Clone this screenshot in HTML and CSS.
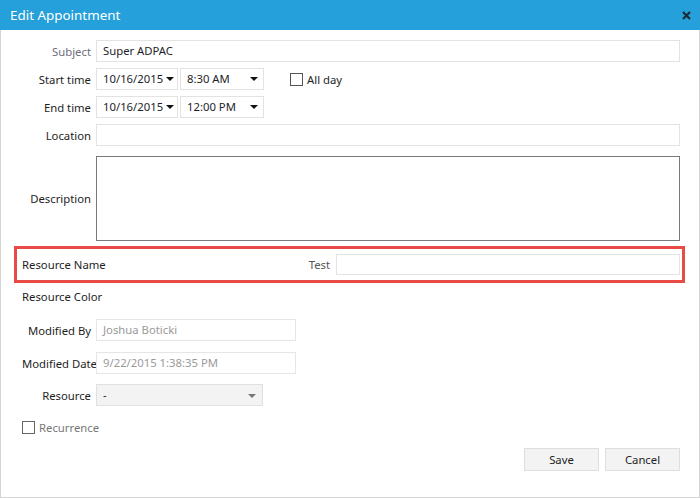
FILE: index.html
```html
<!DOCTYPE html>
<html>
<head>
<meta charset="utf-8">
<link rel="stylesheet" href="styles.css">
</head>
<body>
<div class="dialog">
  <div class="titlebar">
    <span class="title">Edit Appointment</span>
    <svg class="close" width="9" height="9" viewBox="0 0 9 9"><path d="M1 1L8 8M8 1L1 8" stroke="#1b2b3a" stroke-width="2.2"/></svg>
  </div>
  <div class="form">
    <div class="row">
      <label class="lbl lbl-muted">Subject</label>
      <div class="input">Super ADPAC</div>
    </div>
    <div class="row">
      <label class="lbl">Start time</label>
      <div class="inline">
        <div class="drop date">10/16/2015<span class="arrow"></span></div>
        <div class="drop time">8:30 AM<span class="arrow"></span></div>
        <div class="check allday"><span class="box"></span>All day</div>
      </div>
    </div>
    <div class="row">
      <label class="lbl">End time</label>
      <div class="inline">
        <div class="drop date">10/16/2015<span class="arrow"></span></div>
        <div class="drop time">12:00 PM<span class="arrow"></span></div>
      </div>
    </div>
    <div class="row">
      <label class="lbl">Location</label>
      <div class="input"></div>
    </div>
    <div class="row row-desc">
      <label class="lbl">Description</label>
      <div class="textarea"></div>
    </div>
    <div class="highlight">
      <span class="hl-name">Resource Name</span>
      <span class="hl-test">Test</span>
      <div class="input hl-input"></div>
    </div>
    <div class="plain color">Resource Color</div>
    <div class="row row-mod">
      <label class="lbl">Modified By</label>
      <div class="input short disabled">Joshua Boticki</div>
    </div>
    <div class="row row-mod2">
      <label class="lbl lbl-wide">Modified Date</label>
      <div class="input short disabled">9/22/2015 1:38:35 PM</div>
    </div>
    <div class="row row-mod2">
      <label class="lbl">Resource</label>
      <div class="combo">-<span class="arrow gray"></span></div>
    </div>
    <div class="check recurrence"><span class="box"></span>Recurrence</div>
    <div class="buttons">
      <button class="btn">Save</button>
      <button class="btn">Cancel</button>
    </div>
  </div>
</div>
</body>
</html>
```
FILE: styles.css
```css
* { box-sizing: border-box; }
html, body { margin: 0; padding: 0; background: #fff; }
body {
  font-family: "Noto Sans", "Open Sans", sans-serif;
  font-size: 11.3px;
  color: #1e1e1e;
}
.dialog {
  width: 700px;
  height: 498px;
  border: 1px solid #d4d4d4;
  border-top: none;
  background: #fff;
}
.titlebar {
  height: 30px;
  margin: 0 -1px;
  background: #26a0da;
  display: flex;
  align-items: center;
  justify-content: space-between;
  padding: 0 9px 0 10px;
}
.title { color: #fff; font-size: 13.4px; }
.close { display: block; }
.form {
  padding: 10px 19px 0 0;
  display: flex;
  flex-direction: column;
}
.row {
  display: grid;
  grid-template-columns: 90px 1fr;
  column-gap: 5px;
  align-items: center;
  height: 22px;
  margin-bottom: 6px;
}
.lbl { text-align: right; white-space: nowrap; }
.lbl-muted { color: #6e6e7c; }
.lbl-wide { margin-right: -6px; }
.input {
  height: 22px;
  border: 1px solid #e3e3e3;
  padding: 0 6px;
  line-height: 20px;
  color: #1e1e2a;
  background: #fff;
}
.inline { display: flex; align-items: center; gap: 2px; height: 22px; }
.drop {
  position: relative;
  height: 22px;
  border: 1px solid #e3e3e3;
  line-height: 20px;
  padding: 0 6px;
  color: #1e1e2a;
}
.date { width: 82px; }
.time { width: 84px; }
.arrow {
  position: absolute;
  right: 4px;
  top: 8px;
  width: 0; height: 0;
  border-left: 4px solid transparent;
  border-right: 4px solid transparent;
  border-top: 4px solid #111;
}
.date .arrow { right: 3px; }
.time .arrow { right: 5px; }
.arrow.gray { border-top-color: #777; right: 6px; top: 9px; }
.check { display: flex; align-items: center; white-space: nowrap; }
.box {
  width: 13px; height: 13px;
  border: 1px solid #555;
  background: #fff;
  margin-right: 4px;
}
.allday { margin-left: 24px; }
.row:nth-child(4) { margin-bottom: 10px; }
.row-desc { height: 85px; margin-bottom: 5px; }
.textarea { height: 85px; border: 1px solid #7a7a7a; }
.highlight {
  margin: 0 -5px 0 13px;
  border: 3px solid #e84a45;
  height: 37px;
  display: flex;
  align-items: center;
  padding: 0 2px 0 5px;
}
.hl-name { flex: 0 0 auto; }
.hl-test { margin-left: auto; margin-right: 6px; color: #555; }
.hl-input { width: 344px; height: 21px; }
.plain { padding-left: 21px; }
.color { margin-top: 4px; height: 20px; line-height: 20px; }
.row-mod { margin-top: 12px; margin-bottom: 11px; }
.row-mod2 { margin-bottom: 10px; }
.short { width: 200px; }
.disabled { color: #9a9a9a; border-color: #e6e6e6; }
.combo {
  position: relative;
  width: 167px;
  height: 22px;
  background: #f3f3f3;
  border: 1px solid #e0e0e0;
  line-height: 20px;
  padding: 0 6px;
}
.recurrence { padding-left: 21px; color: #777; margin-top: 4px; height: 14px; }
.recurrence .box { border-color: #666; }
.buttons {
  display: flex;
  justify-content: flex-end;
  gap: 6px;
  margin-top: 14px;
}
.btn {
  width: 75px;
  height: 23px;
  background: #f3f3f3;
  border: 1px solid #dedede;
  font: inherit;
  color: #1e1e1e;
  padding: 0;
}
```
